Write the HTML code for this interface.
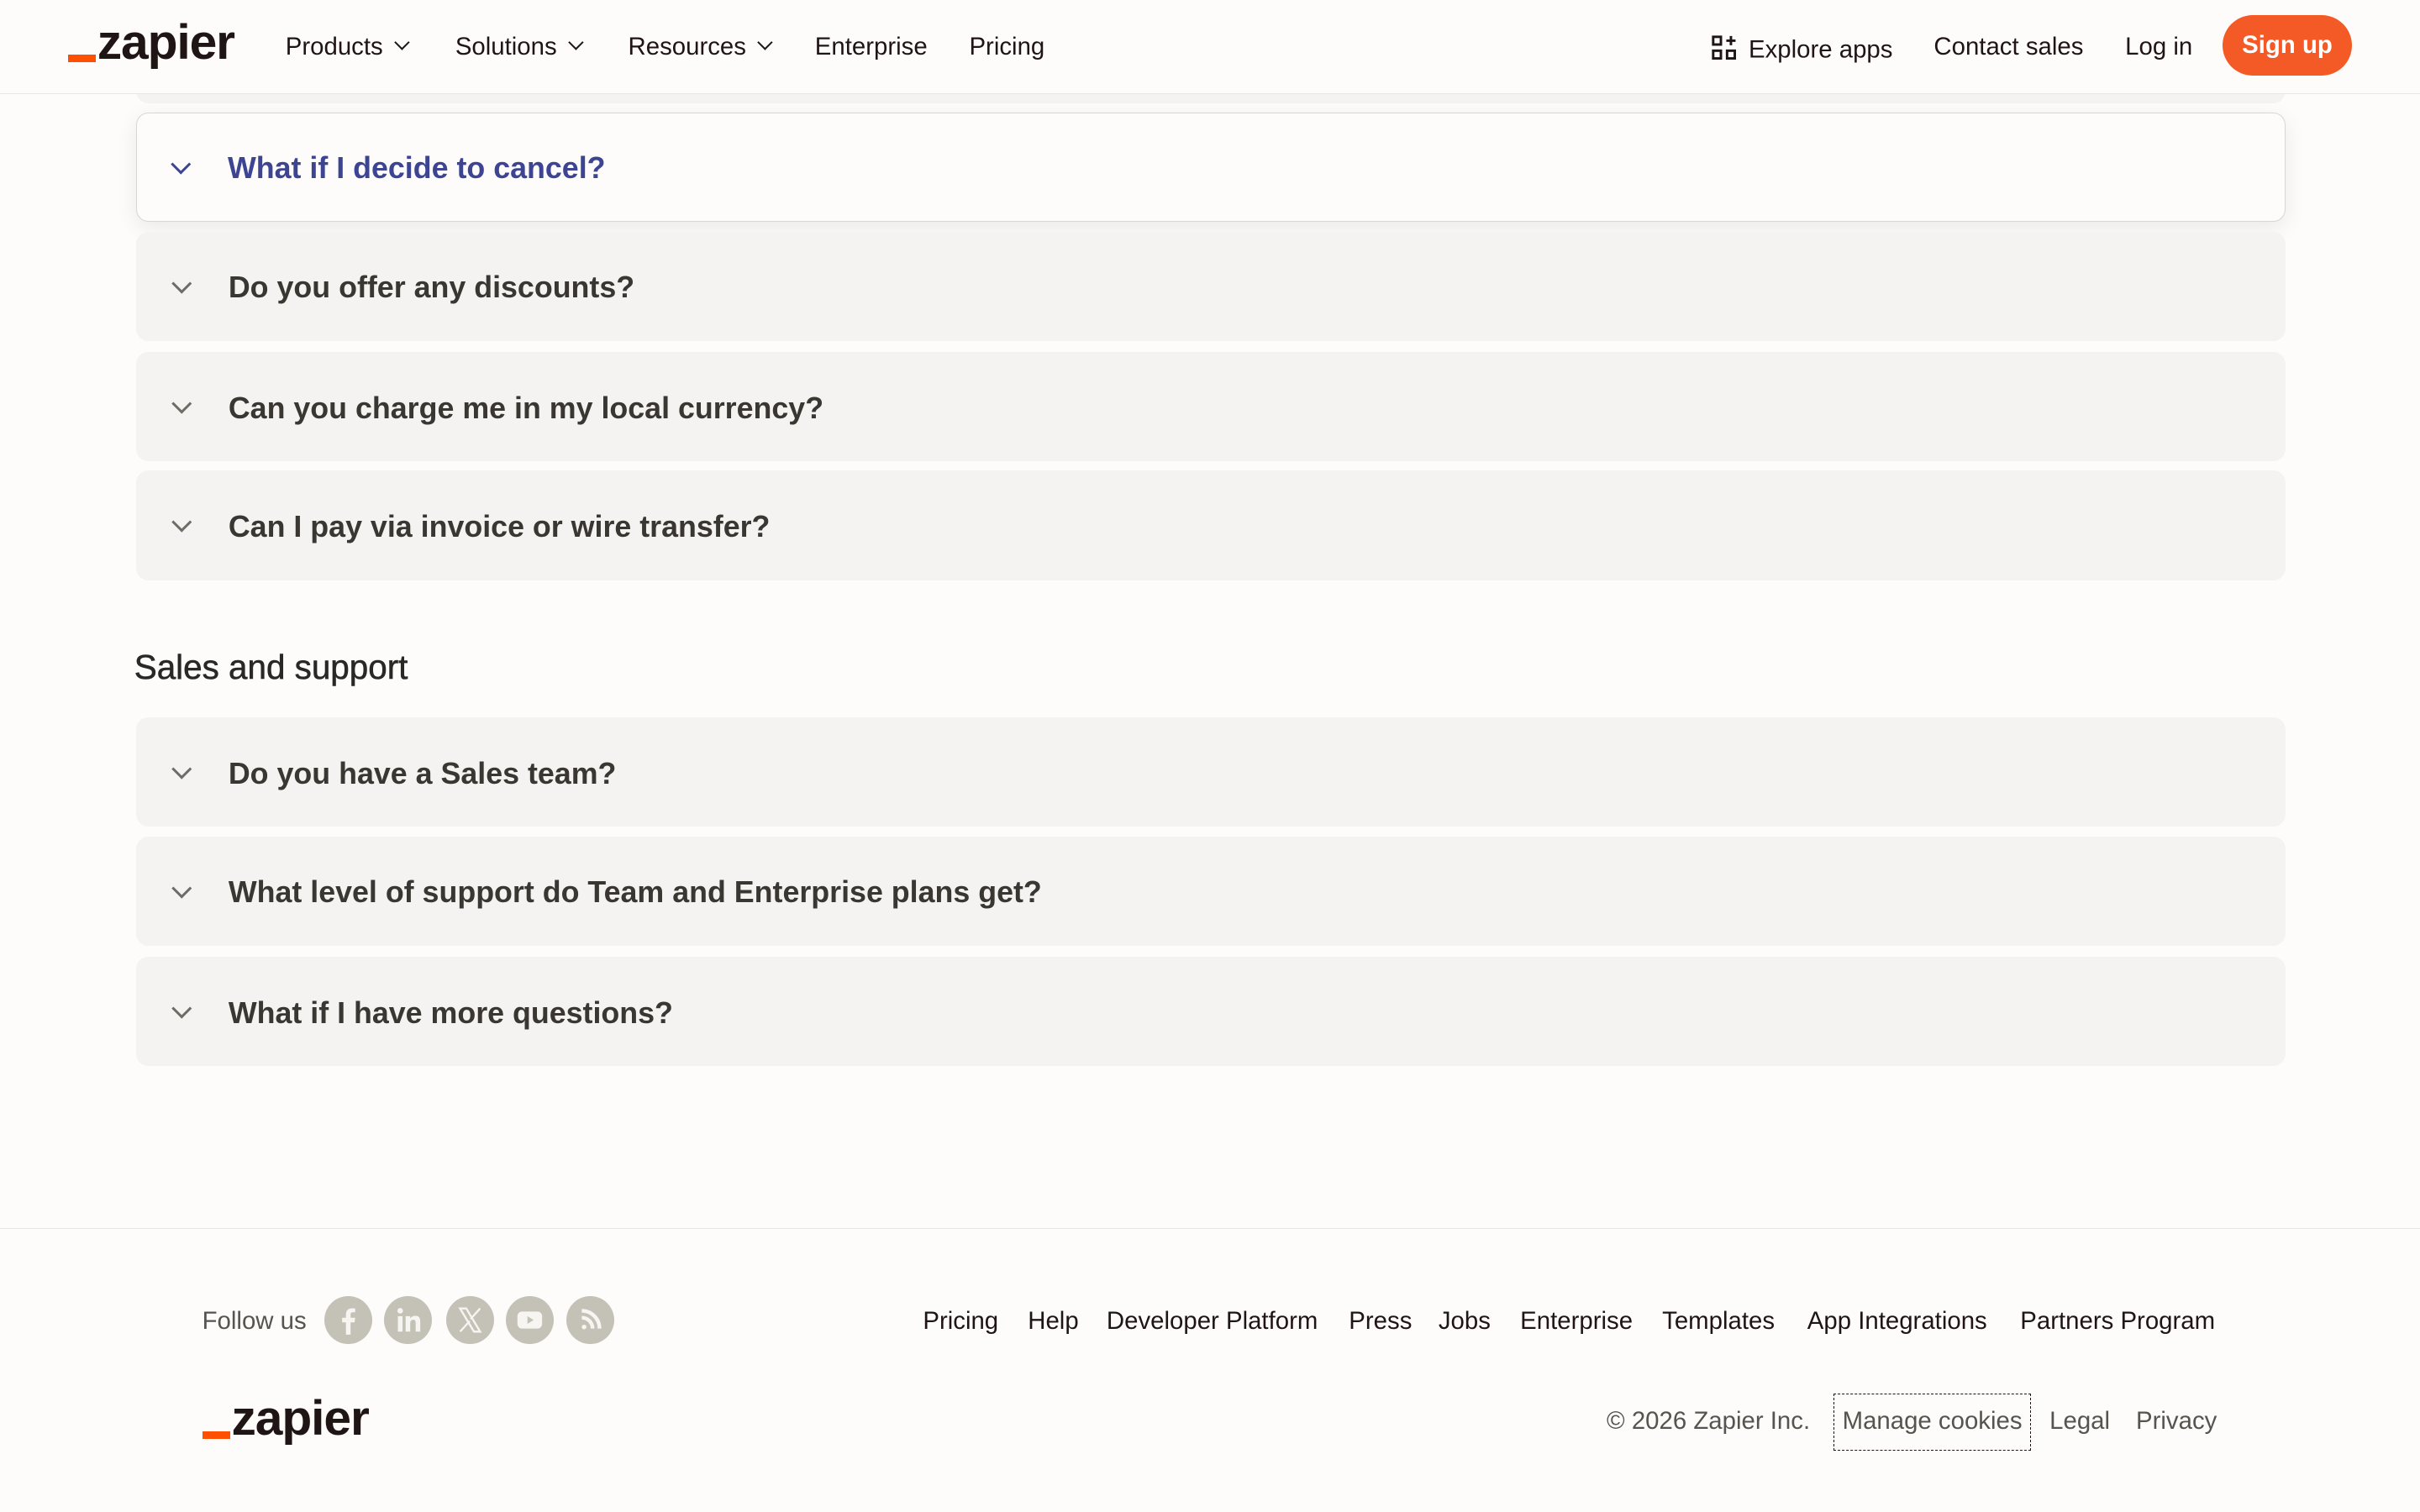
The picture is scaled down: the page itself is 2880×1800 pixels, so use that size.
<!DOCTYPE html>
<html><head><meta charset="utf-8"><style>
*{box-sizing:border-box;margin:0;padding:0}
html,body{width:2880px;height:1800px;overflow:hidden;background:#fdfcfa}
#w{zoom:1.83673;width:1568px;height:980px;position:relative;font-family:"Liberation Sans",sans-serif;color:#201515}
.hdr{position:absolute;left:0;top:0;width:1568px;height:61px;background:#fdfcfa;border-bottom:1px solid #e8e6e1;z-index:5}
.logo{position:absolute;font-weight:bold;letter-spacing:-0.6px;color:#201515}
.logo:before{content:"";position:absolute;left:0;bottom:5px;width:18px;height:5px;background:#ff4f00}
.nav{position:absolute;top:21px;font-size:16px;color:#201515}
.nav span{position:absolute;white-space:nowrap}
.chev{display:inline-block;width:7px;height:7px;border-right:1.5px solid #201515;border-bottom:1.5px solid #201515;transform:rotate(45deg);margin-left:9px;position:relative;top:-4px}
.btn{position:absolute;left:1440px;top:10px;width:84px;height:39px;border-radius:20px;background:#f45a25;color:#fff;font-weight:bold;font-size:16px;text-align:center;line-height:39px}
.card{position:absolute;left:88px;width:1393px;height:71px;border-radius:8px;background:#f4f3f1}
.card .q{position:absolute;left:60px;top:1px;line-height:71px;font-size:19.5px;font-weight:bold;color:#3a3733}
.card .c{position:absolute;left:25px;top:29px;width:9px;height:9px;border-right:1.8px solid #6f6b66;border-bottom:1.8px solid #6f6b66;transform:rotate(45deg)}
.open{background:#fdfcfa;border:1px solid #d8d6d1;box-shadow:0 4px 14px rgba(0,0,0,.08)}
.open .q{color:#3d4592;left:59px;line-height:69px}
.open .c{border-color:#3d4592;left:24px;top:28px}
.ft{position:absolute;font-size:16px;white-space:nowrap}
.ic{position:absolute;top:840px;width:31px;height:31px;border-radius:50%;background:#c4c1b6}
</style></head><body><div id="w">
<div class="card" style="top:-4px;height:71px"></div>
<div class="hdr">
<div class="logo" style="left:44px;top:9px;font-size:32px;padding-left:19px;">zapier</div>
<div class="nav">
<span style="left:185px">Products<i class="chev"></i></span>
<span style="left:295px">Solutions<i class="chev"></i></span>
<span style="left:407px">Resources<i class="chev"></i></span>
<span style="left:528px">Enterprise</span>
<span style="left:628px">Pricing</span>
<span style="left:1109px"><svg width="16" height="16" viewBox="0 0 16 16" style="position:relative;top:2px;margin-right:8px" fill="none" stroke="#201515" stroke-width="1.6"><rect x="1" y="1" width="5" height="5"/><rect x="1" y="10" width="5" height="5"/><rect x="10" y="10" width="5" height="5"/><path d="M12.5 0.5v6M9.5 3.5h6"/></svg>Explore apps</span>
<span style="left:1253px">Contact sales</span>
<span style="left:1377px">Log in</span>
</div>
<div class="btn">Sign up</div>
</div>
<div class="card open" style="top:73px"><i class="c"></i><div class="q">What if I decide to cancel?</div></div>
<div class="card" style="top:150px"><i class="c"></i><div class="q">Do you offer any discounts?</div></div>
<div class="card" style="top:228px"><i class="c"></i><div class="q">Can you charge me in my local currency?</div></div>
<div class="card" style="top:305px"><i class="c"></i><div class="q">Can I pay via invoice or wire transfer?</div></div>
<div style="position:absolute;left:87px;top:420px;font-size:22px;color:#2b2724;-webkit-text-stroke:0.3px #2b2724">Sales and support</div>
<div class="card" style="top:465px"><i class="c"></i><div class="q">Do you have a Sales team?</div></div>
<div class="card" style="top:542px"><i class="c"></i><div class="q">What level of support do Team and Enterprise plans get?</div></div>
<div class="card" style="top:620px"><i class="c"></i><div class="q">What if I have more questions?</div></div>
<div style="position:absolute;left:0;top:796px;width:1568px;border-top:1px solid #e8e6e1"></div>
<div class="ft" style="left:131px;top:847px;color:#57534e">Follow us</div>
<div class="ic" style="left:210px"><svg width="31" height="31" viewBox="0 0 31 31"><path d="M17 25v-8h2.6l.4-3H17v-2c0-.9.3-1.5 1.5-1.5H20V8c-.3 0-1.2-.1-2.2-.1-2.2 0-3.8 1.4-3.8 3.9V14h-2.5v3H14v8z" fill="#f6f5f2"/></svg></div>
<div class="ic" style="left:249px"><svg width="31" height="31" viewBox="0 0 31 31" fill="#f6f5f2"><rect x="9" y="13" width="3" height="10"/><circle cx="10.5" cy="9.5" r="1.8"/><path d="M14 13h3v1.5c.6-1 1.7-1.8 3.3-1.8 2.6 0 3.2 1.7 3.2 4V23h-3v-5.5c0-1.3-.3-2.2-1.6-2.2s-1.9 1-1.9 2.2V23h-3z"/></svg></div>
<div class="ic" style="left:289px"><svg width="31" height="31" viewBox="0 0 31 31" fill="none" stroke="#f6f5f2" stroke-width="1.3"><path d="M9 8h4l9 15h-4zM22 8l-6.2 6.8M9 23l6.2-6.8"/></svg></div>
<div class="ic" style="left:328px"><svg width="31" height="31" viewBox="0 0 31 31"><rect x="7.5" y="10" width="16" height="11" rx="3" fill="#f6f5f2"/><path d="M14 13v5l4-2.5z" fill="#c4c1b6"/></svg></div>
<div class="ic" style="left:367px"><svg width="31" height="31" viewBox="0 0 31 31" fill="none" stroke="#f6f5f2" stroke-width="2.4"><circle cx="11.5" cy="20" r="1.5" fill="#f6f5f2" stroke="none"/><path d="M10 14a7 7 0 0 1 7 7M10 9.5a11.5 11.5 0 0 1 11.5 11.5"/></svg></div>
<div class="ft" style="top:847px;left:598px;color:#201515">Pricing</div>
<div class="ft" style="top:847px;left:666px">Help</div>
<div class="ft" style="top:847px;left:717px">Developer Platform</div>
<div class="ft" style="top:847px;left:874px">Press</div>
<div class="ft" style="top:847px;left:932px">Jobs</div>
<div class="ft" style="top:847px;left:985px">Enterprise</div>
<div class="ft" style="top:847px;left:1077px">Templates</div>
<div class="ft" style="top:847px;left:1171px">App Integrations</div>
<div class="ft" style="top:847px;left:1309px">Partners Program</div>
<div class="logo" style="left:131px;top:901px;font-size:32px;padding-left:19px;">zapier</div>
<div class="ft" style="top:912px;left:1041px;color:#57534e">© 2026 Zapier Inc.</div>
<div class="ft" style="top:903px;left:1188px;height:37px;width:128px;border:1px dashed #201515;line-height:35px;text-align:center;color:#57534e">Manage cookies</div>
<div class="ft" style="top:912px;left:1328px;color:#57534e">Legal</div>
<div class="ft" style="top:912px;left:1384px;color:#57534e">Privacy</div>
</div></body></html>
